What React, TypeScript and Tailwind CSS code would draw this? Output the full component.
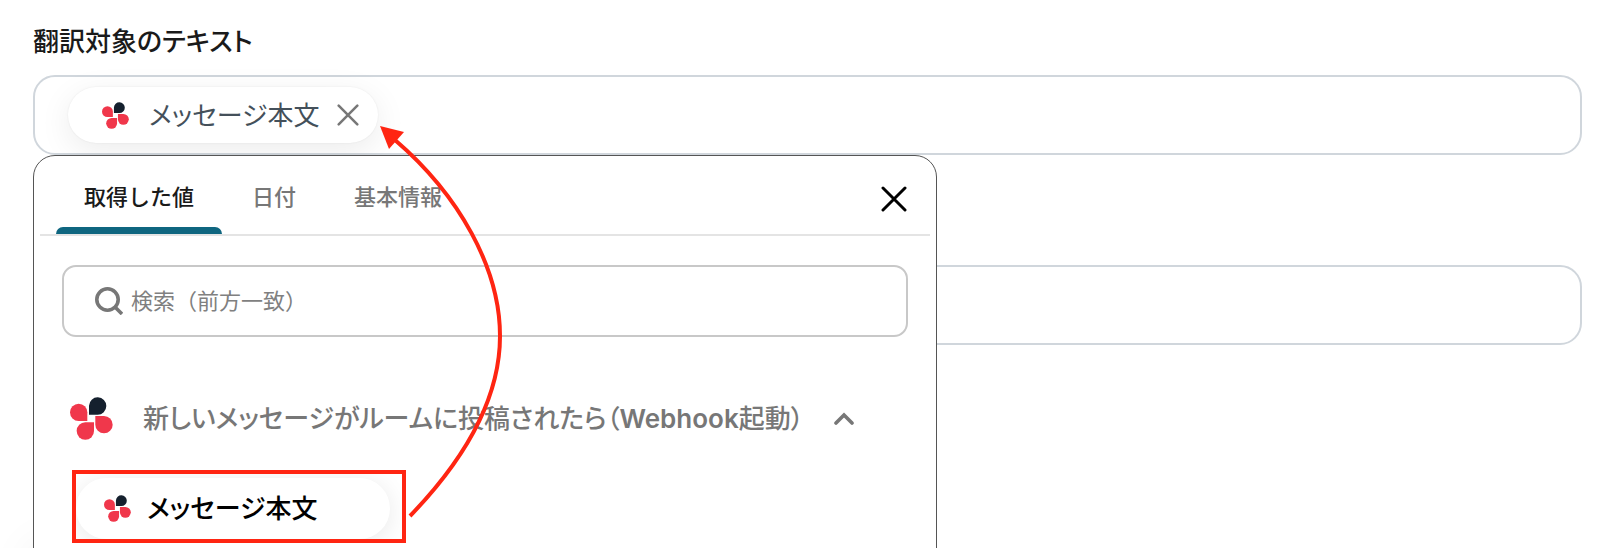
import React from 'react';

interface LogoProps {
  className?: string;
}

interface CloseIconProps {
  className?: string;
  strokeWidth: number;
}

const tabs = ['取得した値', '日付', '基本情報'];

const Logo: React.FC<LogoProps> = ({ className }) => (
  <svg className={className} viewBox="27 21 129 129" aria-hidden="true">
    <path d="M84 74V47a26 26 0 1 1 26 27Z" fill="#15202e" />
    <path d="M79 93V67a26 26 0 1 0-26 26Z" fill="#f0374b" />
    <path d="M103 78V104a26 26 0 1 0 26-26Z" fill="#f0374b" />
    <path d="M99 97H73a26 26 0 1 0 26 26Z" fill="#f0374b" />
  </svg>
);

const CloseIcon: React.FC<CloseIconProps> = ({ className, strokeWidth }) => (
  <svg className={className} viewBox="0 0 26 26" fill="none" stroke="currentColor" strokeWidth={strokeWidth} strokeLinecap="round" aria-hidden="true">
    <path d="M2 2 24 24M24 2 2 24" />
  </svg>
);

const ValuePicker: React.FC = () => (
  <div className="absolute -left-0.5 top-full mt-0.5 w-[904px] h-[640px] bg-white border border-[#555555] rounded-[22px] shadow-[-24px_370px_44px_-24px_rgba(0,0,0,0.08)]">
    <div className="mx-1.5 h-20 flex items-stretch justify-between border-b-2 border-[#e4e4e4]">
      <div role="tablist" className="flex gap-0.5 pl-4">
        {tabs.map((tab, idx) => (
          <button
            key={tab}
            role="tab"
            aria-selected={idx === 0}
            className={
              idx === 0
                ? 'relative px-7 pt-1 text-[22px] font-medium text-[#1a1a1a] after:absolute after:inset-x-0 after:bottom-0 after:h-[7px] after:rounded-t-lg after:bg-[#0f6680]'
                : 'px-7 pt-1 text-[22px] font-medium text-[#777777]'
            }
          >
            {tab}
          </button>
        ))}
      </div>
      <button aria-label="閉じる" className="pt-2 pr-[23px] text-black">
        <CloseIcon className="w-[26px] h-[26px]" strokeWidth={3} />
      </button>
    </div>

    <div className="px-7 pt-[29px]">
      <label className="flex items-center gap-2 h-[72px] pl-[31px] border-2 border-[#c8c8c8] rounded-[14px]">
        <svg className="w-7 h-7 shrink-0" viewBox="0 0 28 28" fill="none" stroke="#777777" strokeWidth="3.6" aria-hidden="true">
          <circle cx="12.5" cy="12.5" r="10.7" />
          <path d="m20 20 7 7" />
        </svg>
        <input
          type="text"
          aria-label="検索"
          placeholder="検索（前方一致）"
          className="grow outline-none text-[22px] font-normal placeholder:text-[#808080]"
        />
      </label>
    </div>

    <button aria-expanded="true" className="flex items-center mt-[57px] ml-9 h-12 text-[#777777]">
      <Logo className="w-[43px] h-[43px]" />
      <span className="ml-[30px] text-[26px] font-medium whitespace-nowrap [font-feature-settings:'palt']">
        新しいメッセージがルームに投稿されたら（<span className="font-semibold">Webhook</span>起動）
      </span>
      <svg className="ml-[30px] w-5 h-5" viewBox="0 0 20 20" fill="none" stroke="currentColor" strokeWidth="3.6" strokeLinecap="round" aria-hidden="true">
        <path d="m2 15 8-8 8 8" />
      </svg>
    </button>

    <div className="w-fit mt-7 ml-[38px] pt-1 pr-3 border-4 border-[#ff2512] overflow-hidden">
      <button className="flex items-center gap-4 w-[314px] h-[61px] pl-7 bg-white rounded-full shadow-[0_4px_24px_rgba(0,0,0,0.09)]">
        <Logo className="w-[27px] h-[27px]" />
        <span className="text-[26px] font-medium text-black [font-feature-settings:'palt']">メッセージ本文</span>
      </button>
    </div>
  </div>
);

const App: React.FC = () => {
  return (
    <main className="relative h-screen overflow-hidden bg-white pl-[33px] pr-[18px] pt-5 font-['Inter','Noto_Sans_CJK_JP',sans-serif]">
      <h2 id="source-label" className="h-[55px] text-[26px] leading-[44px] font-medium text-[#1a1a1a] [font-feature-settings:'palt']">
        翻訳対象のテキスト
      </h2>
      <div
        role="group"
        aria-labelledby="source-label"
        className="relative z-10 flex items-center h-20 pl-[33px] border-2 border-[#d0d6dc] rounded-[22px]"
      >
        <div className="flex items-center w-[310px] h-14 pl-[34px] bg-white rounded-full shadow-[0_8px_32px_rgba(0,0,0,0.08),0_0_2px_rgba(0,0,0,0.08)]">
          <Logo className="w-[27px] h-[27px]" />
          <span className="ml-5 text-[26px] font-normal text-[#44505a] [font-feature-settings:'palt']">メッセージ本文</span>
          <button aria-label="削除" className="ml-[18px] text-[#777777]">
            <CloseIcon className="w-[22px] h-[22px]" strokeWidth={3} />
          </button>
        </div>
        <ValuePicker />
      </div>

      <input type="text" aria-label="翻訳先" className="block w-full h-20 mt-[110px] px-8 border-2 border-[#d0d6dc] rounded-[22px] outline-none" />

      {/* annotation arrow from the picked value to the chip */}
      <svg className="absolute left-0 top-0 z-20 w-[520px] h-[540px] pointer-events-none" viewBox="0 0 520 540" fill="none" aria-hidden="true">
        <path d="M410 516C470 454 500 395 500 336C500 268 459 195 395 140" stroke="#ff2512" strokeWidth="4" />
        <path d="M380 126 404 132 389 149Z" fill="#ff2512" />
      </svg>
    </main>
  );
};

export default App;
